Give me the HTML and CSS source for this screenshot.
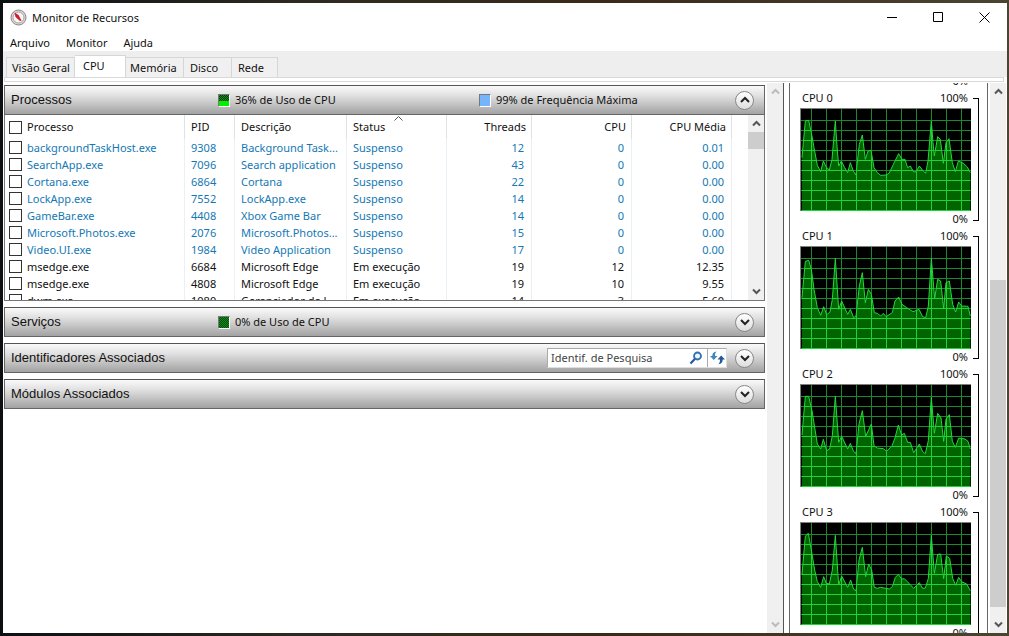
FILE: index.html
```html
<!DOCTYPE html>
<html lang="pt-BR">
<head>
<meta charset="utf-8">
<title>Monitor de Recursos</title>
<link rel="stylesheet" href="styles.css">
</head>
<body>
<div class="window">
  <header class="titlebar">
    <svg class="app-icon" width="17" height="17" viewBox="0 0 17 17">
      <circle cx="8.500" cy="8.500" r="7.500" fill="#dedcdc" stroke="#858383"/>
      <circle cx="8.500" cy="8.500" r="5.500" fill="#fcf6f5" stroke="#a39c9c"/>
      <path d="M4.500 3.500l4 2.500 3 5.500-1.500.5-4.500-4z" fill="#cc1f2c"/>
    </svg>
    <h1 class="title">Monitor de Recursos</h1>
    <button class="winbtn" aria-label="Minimizar"><svg width="11" height="11"><path d="M0 5.500h10"/></svg></button>
    <button class="winbtn" aria-label="Maximizar"><svg width="11" height="11"><path d="M.5.5h9v9h-9z"/></svg></button>
    <button class="winbtn" aria-label="Fechar"><svg width="11" height="11"><path d="M.5.5l10 10M10.500.5l-10 10"/></svg></button>
  </header>
  <nav class="menu">
    <button>Arquivo</button><button>Monitor</button><button>Ajuda</button>
  </nav>
  <div class="tabs" role="tablist">
    <button class="tab tab-overview" role="tab">Visão Geral</button>
    <button class="tab tab-cpu selected" role="tab" aria-selected="true">CPU</button>
    <button class="tab tab-memory" role="tab">Memória</button>
    <button class="tab tab-disk" role="tab">Disco</button>
    <button class="tab tab-network" role="tab">Rede</button>
  </div>
  <div class="tab-edge"></div>
  <main class="content">
    <div class="sections">
      <section>
        <div class="bar">
          <h2>Processos</h2>
          <span class="stat"><i class="swatch cpu-load"></i>36% de Uso de CPU</span>
          <span class="stat"><i class="swatch freq"></i>99% de Frequência Máxima</span>
          <button class="round" aria-label="Recolher"><svg width="10" height="8"><path d="M1 6l4-4 4 4"/></svg></button>
        </div>
        <div class="list">
          <table>
            <colgroup><col class="c-name"><col class="c-pid"><col class="c-desc"><col class="c-status"><col class="c-threads"><col class="c-num"><col class="c-num"><col></colgroup>
            <thead><tr>
              <th><label><input type="checkbox">Processo</label></th><th>PID</th><th>Descrição</th>
              <th class="sorted">Status<svg class="sort" width="9" height="5"><path d="M.5 4.500l4-4 4 4"/></svg></th>
              <th class="n">Threads</th><th class="n">CPU</th><th class="n">CPU Média</th><th></th>
            </tr></thead>
            <tbody>
              <tr class="idle"><td><label><input type="checkbox">backgroundTaskHost.exe</label></td><td>9308</td><td>Background Task...</td><td>Suspenso</td><td class="n">12</td><td class="n">0</td><td class="n">0.01</td><td></td></tr>
              <tr class="idle"><td><label><input type="checkbox">SearchApp.exe</label></td><td>7096</td><td>Search application</td><td>Suspenso</td><td class="n">43</td><td class="n">0</td><td class="n">0.00</td><td></td></tr>
              <tr class="idle"><td><label><input type="checkbox">Cortana.exe</label></td><td>6864</td><td>Cortana</td><td>Suspenso</td><td class="n">22</td><td class="n">0</td><td class="n">0.00</td><td></td></tr>
              <tr class="idle"><td><label><input type="checkbox">LockApp.exe</label></td><td>7552</td><td>LockApp.exe</td><td>Suspenso</td><td class="n">14</td><td class="n">0</td><td class="n">0.00</td><td></td></tr>
              <tr class="idle"><td><label><input type="checkbox">GameBar.exe</label></td><td>4408</td><td>Xbox Game Bar</td><td>Suspenso</td><td class="n">14</td><td class="n">0</td><td class="n">0.00</td><td></td></tr>
              <tr class="idle"><td><label><input type="checkbox">Microsoft.Photos.exe</label></td><td>2076</td><td>Microsoft.Photos...</td><td>Suspenso</td><td class="n">15</td><td class="n">0</td><td class="n">0.00</td><td></td></tr>
              <tr class="idle"><td><label><input type="checkbox">Video.UI.exe</label></td><td>1984</td><td>Video Application</td><td>Suspenso</td><td class="n">17</td><td class="n">0</td><td class="n">0.00</td><td></td></tr>
              <tr><td><label><input type="checkbox">msedge.exe</label></td><td>6684</td><td>Microsoft Edge</td><td>Em execução</td><td class="n">19</td><td class="n">12</td><td class="n">12.35</td><td></td></tr>
              <tr><td><label><input type="checkbox">msedge.exe</label></td><td>4808</td><td>Microsoft Edge</td><td>Em execução</td><td class="n">19</td><td class="n">10</td><td class="n">9.55</td><td></td></tr>
              <tr><td><label><input type="checkbox">dwm.exe</label></td><td>1080</td><td>Gerenciador de J...</td><td>Em execução</td><td class="n">14</td><td class="n">3</td><td class="n">5.60</td><td></td></tr>
            </tbody>
          </table>
          <div class="scroll list-scroll">
            <button aria-label="Rolar para cima"><svg width="9" height="7"><path d="M1 5.500l3.500-3.500 3.500 3.500"/></svg></button>
            <div class="track"><div class="thumb"></div></div>
            <button aria-label="Rolar para baixo"><svg width="9" height="7"><path d="M1 1.500l3.500 3.500 3.500-3.500"/></svg></button>
          </div>
        </div>
      </section>
      <section class="bar">
        <h2>Serviços</h2>
        <span class="stat"><i class="swatch cpu-idle"></i>0% de Uso de CPU</span>
        <button class="round" aria-label="Expandir"><svg width="10" height="8"><path d="M1 2l4 4 4-4"/></svg></button>
      </section>
      <section class="bar with-search">
        <h2>Identificadores Associados</h2>
        <form class="search">
          <input type="text" placeholder="Identif. de Pesquisa" aria-label="Identif. de Pesquisa">
          <button type="button" aria-label="Pesquisar"><svg width="14" height="14"><circle cx="8.500" cy="5" r="3.500" fill="#eaf4fc" stroke="#2f6fb4" stroke-width="1.800"/><path d="M6 7.800L1.500 12.500" stroke="#26589c" stroke-width="2.200"/></svg></button>
          <button type="button" class="refresh" aria-label="Atualizar"><svg width="15" height="14"><path d="M0 5h2.300C2.300 2.500 3.500.8 6.500.5 5.300 1.800 5 3 5 5h2.500L3.800 9z" fill="#3f86c0"/><path d="M7.500 8.500L11.200 4.500 15 8.500h-2.300c0 2.700-1.200 4.500-4.200 4.800 1.200-1.300 1.500-2.800 1.500-4.800z" fill="#235a9c"/></svg></button>
        </form>
        <button class="round" aria-label="Expandir"><svg width="10" height="8"><path d="M1 2l4 4 4-4"/></svg></button>
      </section>
      <section class="bar">
        <h2>Módulos Associados</h2>
        <button class="round" aria-label="Expandir"><svg width="10" height="8"><path d="M1 2l4 4 4-4"/></svg></button>
      </section>
    </div>
    <div class="scroll main-scroll disabled">
      <button disabled aria-label="Rolar para cima"><svg width="9" height="7"><path d="M1 5.500l3.500-3.500 3.500 3.500"/></svg></button>
      <div class="track"></div>
      <button disabled aria-label="Rolar para baixo"><svg width="9" height="7"><path d="M1 1.500l3.500 3.500 3.500-3.500"/></svg></button>
    </div>
    <aside class="graphs">
      <div class="graph-view">
        <div class="graph-list">
          <div class="graph tail"><div class="plot"><div class="low">0%</div></div><div class="bracket"></div></div>
        </div>
      </div>
      <div class="scroll graph-scroll">
        <button aria-label="Rolar para cima"><svg width="9" height="7"><path d="M1 5.500l3.500-3.500 3.500 3.500"/></svg></button>
        <div class="track"><div class="thumb"></div></div>
        <button aria-label="Rolar para baixo"><svg width="9" height="7"><path d="M1 1.500l3.500 3.500 3.500-3.500"/></svg></button>
      </div>
    </aside>
  </main>
</div>
<script src="graphs.js"></script>
</body>
</html>
```
FILE: styles.css
```css
* { box-sizing: border-box; }
body {
  margin: 0;
  height: 100vh;
  padding: 3px 2px 3px 3px;
  overflow: hidden;
  background: linear-gradient(90deg, #0d1013 0%, #2e2a20 30%, #3a2a1c 60%, #4c4330 100%);
  font: 11px/14px "Noto Sans", "Open Sans", sans-serif;
  color: #111;
}
button { font: inherit; color: inherit; border: 0; padding: 0; background: none; }
h1, h2 { margin: 0; font-weight: 400; }
svg { display: block; fill: none; }

.window { height: 100%; display: flex; flex-direction: column; background: #fff; overflow: hidden; }

.titlebar { display: flex; align-items: center; height: 29px; padding-left: 7px; flex: none; }
.title { flex: 1; margin-left: 5px; font-size: 11px; line-height: 16px; }
.winbtn { width: 46px; height: 28px; display: grid; place-items: center; }
.winbtn svg { stroke: #000; }

.menu { display: flex; align-items: flex-end; gap: 16px; height: 19px; padding: 0 7px; flex: none; }
.menu button { height: 16px; }

.tabs { display: flex; align-items: flex-end; height: 26px; padding-left: 3px; background: #eee; flex: none; }
.tab { height: 20px; border: 1px solid #d6d6d6; border-width: 1px 1px 0 0; background: #f0f0f0; text-align: left; padding-left: 5px; white-space: nowrap; }
.tab-overview { width: 69px; border-left-width: 1px; }
.tab-cpu { width: 51px; }
.tab-memory { width: 58px; padding-left: 4px; }
.tab-disk { width: 48px; padding-left: 6px; }
.tab-network { width: 46px; padding-left: 6px; }
.tab.selected { height: 22px; background: #fff; padding: 0 0 2px 8px; }
.tab-edge { height: 5px; margin: 0 3px 0 1px; border: 1px solid #d9d9d9; background: #fff; flex: none; }

.content { flex: 1; min-height: 0; display: flex; padding: 1px 1px 0; }
.sections { flex: 1; min-width: 0; display: flex; flex-direction: column; gap: 6px; padding: 2px 2px 0 0; }

.bar {
  display: flex; align-items: center; height: 30px; padding: 0 10px 0 6px;
  border: 1px solid #666; border-top-color: #555;
  background: linear-gradient(#fafafa, #e0e0e0 35%, #a2a2a2);
}
.bar h2 { width: 207px; flex: none; font: 13px/16px "Liberation Sans", Arial, sans-serif; white-space: nowrap; }
.bar.with-search h2 { width: auto; }
.stat { display: flex; align-items: center; width: 261px; flex: none; white-space: nowrap; }
.stat + .stat { width: auto; }
.swatch { width: 12px; height: 13px; margin-right: 5px; border: 1px solid #eee; border-color: #777 #fff #fff #777; flex: none; }
.cpu-load { background: linear-gradient(transparent 50%, #00f000 50%), repeating-conic-gradient(#04400a 0 25%, #128a1c 0 50%) 0 0 / 2px 2px; }
.cpu-idle { background: repeating-conic-gradient(#04500a 0 25%, #128a1c 0 50%) 0 0 / 2px 2px; }
.freq { background: #76b5fb; }
.round {
  width: 19px; height: 19px; margin-left: auto; flex: none; display: grid; place-items: center;
  border: 1px solid #888; border-radius: 50%; background: linear-gradient(#fff, #ddd);
}
.round svg { stroke: #222; stroke-width: 2; }
.with-search .round { margin-left: 0; }

.search { display: flex; width: 180px; height: 20px; margin: 0 8px 0 auto; background: #fff; border: 1px solid #aaa; border-right-color: #ddd; border-bottom-color: #ddd; }
.search input { flex: 1; min-width: 0; border: 0; padding: 0 3px; font: inherit; color: #444; background: none; }
.search input::placeholder { color: #444; opacity: 1; }
.search button { width: 22px; display: grid; place-items: center; }
.search .refresh { width: 19px; border-left: 1px solid #aaa; }

.list { display: flex; height: 186px; overflow: hidden; border: 1px solid #777; border-top: 0; }
table { flex: 1; min-width: 0; align-self: flex-start; table-layout: fixed; border-collapse: separate; border-spacing: 0; }
.c-name { width: 180px; } .c-pid { width: 50px; } .c-desc { width: 112px; } .c-status { width: 100px; }
.c-threads { width: 85px; } .c-num { width: 100px; }
th, td { height: 17px; padding: 0 6px; font-weight: 400; text-align: left; white-space: nowrap; border-right: 1px solid #eaf1f5; overflow: hidden; }
th { height: 24px; border-right-color: #dde2e5; position: relative; }
th:last-child, td:last-child { border-right: 0; }
th:first-child, td:first-child { padding-left: 4px; }
td.n { text-align: right; padding-right: 7px; }
th.n { text-align: right; padding-right: 5px; }
.idle { color: #1478b4; }
label { display: flex; align-items: center; gap: 5px; }
label input { appearance: none; width: 13px; height: 13px; margin: 0; border: 1px solid #333; background: #fff; }
.sort { position: absolute; top: 1px; left: 47px; stroke: #555; }

.scroll { display: flex; flex-direction: column; background: #f0f0f0; flex: none; }
.scroll button { height: 17px; display: grid; place-items: center; }
.scroll svg { stroke: #555; stroke-width: 2; }
.scroll.disabled svg { stroke: #bbb; }
.track { flex: 1; display: flex; flex-direction: column; }
.thumb { background: #cdcdcd; }
.list-scroll { width: 16px; }
.list-scroll .thumb { height: 17px; }
.main-scroll { width: 16px; }

.graphs { display: flex; width: 223px; border-left: 1px solid #555; padding-left: 5px; flex: none; }
.graph-view { flex: 1; overflow: hidden; border: 1px solid #666; border-width: 0 1px; padding: 0 8px 0 10px; }
.graph-list { margin-top: -9px; }
.graph { display: grid; grid-template-columns: 1fr 6px; column-gap: 2px; height: 138px; }
.graph.tail { height: 17px; }
.caption { display: flex; justify-content: space-between; padding: 0 3px 0 2px; margin-bottom: 3px; }
.low { text-align: right; padding-right: 3px; }
.chart { width: 100%; height: 103px; margin-bottom: 1px; background: #000; border: 1px solid #808080; border-width: 1px 0 0 1px; }
.chart .grid { stroke: #1a8a2c; shape-rendering: crispEdges; }
.chart .lit { stroke: #1fd235; shape-rendering: crispEdges; }
.chart .area { fill: #006400; }
.chart .line { stroke: #22d83a; }
.chart path { vector-effect: non-scaling-stroke; }
.bracket { margin: 7px 0 8px; border: 1px solid #000; border-left: 0; }
.tail .bracket { margin-top: 0; border-top: 0; }
.graph-scroll { width: 16px; margin-left: 2px; }
.graph-scroll .track::before { content: ""; flex: 180; }
.graph-scroll .thumb { flex: 327; }
.graph-scroll .track::after { content: ""; flex: 9; }
```
FILE: graphs.js
```js
// Each core: vertical origin of its samples, then "x,y" samples (510 x 306 units per chart).
const cores = [
  [99, "36,245 40,200 46,135 56,133 64,170 72,215 82,268 92,287 100,255 108,272 118,282 126,250 132,180 136,135 141,210 146,270 154,255 164,275 173,290 181,260 190,285 198,297 204,240 208,205 217,177 226,250 234,225 243,223 252,275 262,290 272,298 288,297 297,292 310,265 326,233 336,250 345,250 353,275 361,270 371,288 378,287 388,270 398,283 407,292 414,255 424,135 429,200 433,240 443,182 451,190 460,262 468,200 477,188 487,260 496,287 505,255 520,262 532,273 541,290"],
  [63, "36,215 46,106 56,103 64,130 72,190 82,245 92,268 101,242 110,266 120,258 127,220 136,97 146,250 155,225 173,265 181,250 191,275 198,270 208,180 217,140 226,230 235,190 244,205 253,260 262,262 272,270 280,262 288,272 307,260 315,225 326,213 336,235 350,245 369,257 387,250 398,272 407,275 415,240 424,97 434,218 443,160 452,165 461,248 468,170 478,165 488,235 497,258 506,228 515,240 534,241 541,270"],
  [63, "36,213 46,97 56,97 66,140 82,240 92,255 100,226 110,260 119,255 127,215 136,97 146,235 155,217 173,255 181,238 191,263 198,268 207,180 217,140 227,217 244,180 252,245 262,252 280,254 290,262 306,245 315,222 325,183 335,213 343,208 353,235 361,235 371,266 388,240 398,263 406,269 415,230 424,100 433,208 443,148 453,162 461,232 468,165 478,152 487,232 496,250 506,222 525,225 534,232 541,255"],
  [69, "36,223 46,108 55,100 64,150 74,210 82,245 92,262 101,230 109,250 118,252 127,210 136,106 146,255 155,228 173,262 182,240 191,268 198,272 207,180 217,142 227,230 236,192 245,210 253,262 262,265 272,262 298,267 307,260 316,232 325,223 335,237 343,236 352,245 371,265 388,248 398,265 406,264 415,235 424,106 433,220 443,163 452,162 461,236 469,168 479,175 488,235 497,256 506,232 515,245 530,252 541,272"]
];

let grid = "";
for (let x = 31.5; x < 510; x += 45) grid += `M${x} 0V306`;
for (let y = 34.5; y < 306; y += 30) grid += `M0 ${y}H510`;

const list = document.querySelector(".graph-list");
cores.forEach(([top, samples], i) => {
  const line = "M" + samples.split(" ").map(p => {
    const [x, y] = p.split(",").map(Number);
    return `${x - 33} ${y - top}`;
  }).join("L");
  const area = `${line}V306H3Z`;
  list.insertAdjacentHTML("beforeend", `
    <div class="graph">
      <div class="plot">
        <div class="caption"><span>CPU ${i}</span><span>100%</span></div>
        <svg class="chart" viewBox="0 0 510 306" preserveAspectRatio="none">
          <clipPath id="area${i}"><path d="${area}"/></clipPath>
          <path class="grid" d="${grid}"/>
          <path class="area" d="${area}"/>
          <path class="lit" d="${grid}" clip-path="url(#area${i})"/>
          <path class="line" d="${line}"/>
        </svg>
        <div class="low">0%</div>
      </div>
      <div class="bracket"></div>
    </div>`);
});
```
